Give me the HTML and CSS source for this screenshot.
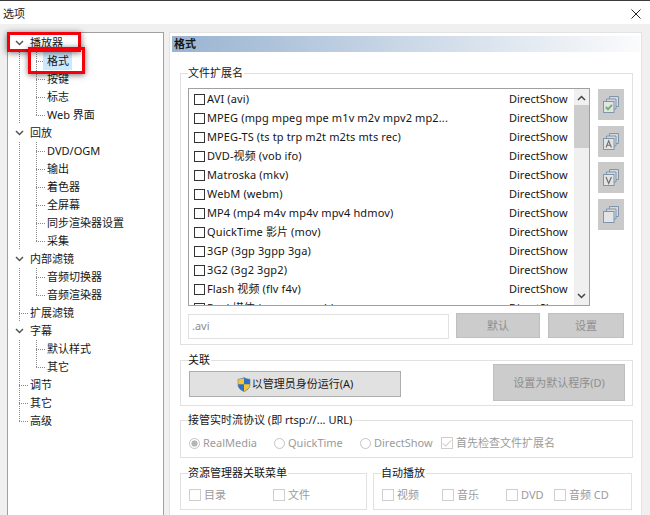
FILE: index.html
```html
<!DOCTYPE html>
<html lang="zh">
<head>
<meta charset="utf-8">
<title>选项</title>
<link rel="stylesheet" href="styles.css">
</head>
<body>
<div class="window">
  <header class="titlebar">
    <span>选项</span>
    <svg class="close" width="10" height="10" viewBox="0 0 10 10"><path d="M0.5 0.5L9.5 9.5M9.5 0.5L0.5 9.5" stroke="#222" stroke-width="1" fill="none"/></svg>
  </header>
  <main class="main">
    <nav class="tree">
      <div class="row"><span class="g chev"><svg width="9" height="6" viewBox="0 0 9 6"><path d="M1 1L4.5 4.5L8 1" stroke="#555" stroke-width="1.5" fill="none"/></svg></span><span class="label">播放器</span></div>
      <div class="row"><span class="g v"></span><span class="g t"></span><span class="label sel">格式</span></div>
      <div class="row"><span class="g v"></span><span class="g t"></span><span class="label">按键</span></div>
      <div class="row"><span class="g v"></span><span class="g t"></span><span class="label">标志</span></div>
      <div class="row"><span class="g v"></span><span class="g l"></span><span class="label">Web 界面</span></div>
      <div class="row"><span class="g chev"><svg width="9" height="6" viewBox="0 0 9 6"><path d="M1 1L4.5 4.5L8 1" stroke="#555" stroke-width="1.5" fill="none"/></svg></span><span class="label">回放</span></div>
      <div class="row"><span class="g v"></span><span class="g t"></span><span class="label">DVD/OGM</span></div>
      <div class="row"><span class="g v"></span><span class="g t"></span><span class="label">输出</span></div>
      <div class="row"><span class="g v"></span><span class="g t"></span><span class="label">着色器</span></div>
      <div class="row"><span class="g v"></span><span class="g t"></span><span class="label">全屏幕</span></div>
      <div class="row"><span class="g v"></span><span class="g t"></span><span class="label">同步渲染器设置</span></div>
      <div class="row"><span class="g v"></span><span class="g l"></span><span class="label">采集</span></div>
      <div class="row"><span class="g chev"><svg width="9" height="6" viewBox="0 0 9 6"><path d="M1 1L4.5 4.5L8 1" stroke="#555" stroke-width="1.5" fill="none"/></svg></span><span class="label">内部滤镜</span></div>
      <div class="row"><span class="g v"></span><span class="g t"></span><span class="label">音频切换器</span></div>
      <div class="row"><span class="g v"></span><span class="g l"></span><span class="label">音频渲染器</span></div>
      <div class="row"><span class="g top t"></span><span class="label">扩展滤镜</span></div>
      <div class="row"><span class="g chev"><svg width="9" height="6" viewBox="0 0 9 6"><path d="M1 1L4.5 4.5L8 1" stroke="#555" stroke-width="1.5" fill="none"/></svg></span><span class="label">字幕</span></div>
      <div class="row"><span class="g v"></span><span class="g t"></span><span class="label">默认样式</span></div>
      <div class="row"><span class="g v"></span><span class="g l"></span><span class="label">其它</span></div>
      <div class="row"><span class="g top t"></span><span class="label">调节</span></div>
      <div class="row"><span class="g top t"></span><span class="label">其它</span></div>
      <div class="row"><span class="g top l"></span><span class="label">高级</span></div>
    </nav>
    <section class="panel">
      <h1 class="heading">格式</h1>
      <div class="group g-files">
        <div class="legend">文件扩展名</div>
        <div class="files-top">
          <div class="list">
            <div class="items">
              <div class="item"><span class="cb"></span><span class="name">AVI (avi)</span><span class="src">DirectShow</span></div>
              <div class="item"><span class="cb"></span><span class="name">MPEG (mpg mpeg mpe m1v m2v mpv2 mp2...</span><span class="src">DirectShow</span></div>
              <div class="item"><span class="cb"></span><span class="name">MPEG-TS (ts tp trp m2t m2ts mts rec)</span><span class="src">DirectShow</span></div>
              <div class="item"><span class="cb"></span><span class="name">DVD-视频 (vob ifo)</span><span class="src">DirectShow</span></div>
              <div class="item"><span class="cb"></span><span class="name">Matroska (mkv)</span><span class="src">DirectShow</span></div>
              <div class="item"><span class="cb"></span><span class="name">WebM (webm)</span><span class="src">DirectShow</span></div>
              <div class="item"><span class="cb"></span><span class="name">MP4 (mp4 m4v mp4v mpv4 hdmov)</span><span class="src">DirectShow</span></div>
              <div class="item"><span class="cb"></span><span class="name">QuickTime 影片 (mov)</span><span class="src">DirectShow</span></div>
              <div class="item"><span class="cb"></span><span class="name">3GP (3gp 3gpp 3ga)</span><span class="src">DirectShow</span></div>
              <div class="item"><span class="cb"></span><span class="name">3G2 (3g2 3gp2)</span><span class="src">DirectShow</span></div>
              <div class="item"><span class="cb"></span><span class="name">Flash 视频 (flv f4v)</span><span class="src">DirectShow</span></div>
              <div class="item"><span class="cb"></span><span class="name">Real 媒体 (rm ram rmvb)</span><span class="src">DirectShow</span></div>
            </div>
            <div class="scrollbar">
              <svg class="arrow" width="9" height="6" viewBox="0 0 9 6"><path d="M1 5L4.5 1.5L8 5" stroke="#444" stroke-width="1.5" fill="none"/></svg>
              <div class="thumb"></div>
              <svg class="arrow" width="9" height="6" viewBox="0 0 9 6"><path d="M1 1L4.5 4.5L8 1" stroke="#444" stroke-width="1.5" fill="none"/></svg>
            </div>
          </div>
          <div class="sidebtns">
            <button class="sidebtn"><svg width="16" height="17" viewBox="0 0 16 17"><path d="M6.5 3V0.5H15.5V10.5H13" fill="#d8d8d8" stroke="#7f95ad"/><path d="M3.5 5.5V3H13V13H10.5" fill="#d8d8d8" stroke="#7f95ad"/><rect x="0.5" y="5.5" width="10.5" height="11" fill="#e2e4e6" stroke="#7f95ad"/><path d="M2.8 11L5 13.3L9 8.8" stroke="#6db56d" stroke-width="2" fill="none"/></svg></button>
            <button class="sidebtn"><svg width="16" height="17" viewBox="0 0 16 17"><path d="M6.5 3V0.5H15.5V10.5H13" fill="#d8d8d8" stroke="#7f95ad"/><path d="M3.5 5.5V3H13V13H10.5" fill="#d8d8d8" stroke="#7f95ad"/><rect x="0.5" y="5.5" width="10.5" height="11" fill="#e2e4e6" stroke="#7f95ad"/><path d="M3 14.5L5.7 7.8L8.4 14.5M4 12.2H7.4" stroke="#6f6f6f" stroke-width="1.1" fill="none"/></svg></button>
            <button class="sidebtn"><svg width="16" height="17" viewBox="0 0 16 17"><path d="M6.5 3V0.5H15.5V10.5H13" fill="#d8d8d8" stroke="#7f95ad"/><path d="M3.5 5.5V3H13V13H10.5" fill="#d8d8d8" stroke="#7f95ad"/><rect x="0.5" y="5.5" width="10.5" height="11" fill="#e2e4e6" stroke="#7f95ad"/><path d="M3 8L5.7 14.5L8.4 8" stroke="#6f6f6f" stroke-width="1.2" fill="none"/></svg></button>
            <button class="sidebtn"><svg width="16" height="17" viewBox="0 0 16 17"><path d="M6.5 3V0.5H15.5V10.5H13" fill="#d8d8d8" stroke="#7f95ad"/><path d="M3.5 5.5V3H13V13H10.5" fill="#d8d8d8" stroke="#7f95ad"/><rect x="0.5" y="5.5" width="10.5" height="11" fill="#e2e4e6" stroke="#7f95ad"/></svg></button>
          </div>
        </div>
        <div class="files-bottom">
          <div class="ext">.avi</div>
          <button class="btn-off btn-default">默认</button>
          <button class="btn-off btn-set">设置</button>
        </div>
      </div>
      <div class="group g-assoc">
        <div class="legend">关联</div>
        <div class="assoc-row">
          <button class="btn-admin"><svg width="14" height="15" viewBox="0 0 14 15"><path d="M7 0.5C5 1.8 3 2.2 1 2.2V7.5C1 11 3.6 13.2 7 14.5C10.4 13.2 13 11 13 7.5V2.2C11 2.2 9 1.8 7 0.5Z" fill="#2f6fc4" stroke="#6c7f99" stroke-width="0.6"/><path d="M7 1V7.3H1.2V2.4C3.2 2.4 5.2 2 7 1ZM7 7.3H12.8C12.8 10.8 10.2 13 7 14.2Z" fill="#f7c52e"/></svg><span>以管理员身份运行(A)</span></button>
          <button class="btn-off btn-default-app">设置为默认程序(D)</button>
        </div>
      </div>
      <div class="group g-stream">
        <div class="legend">接管实时流协议 (即 rtsp://... URL)</div>
        <div class="opts">
          <span class="opt opt-rm"><span class="radio on"></span>RealMedia</span>
          <span class="opt opt-qt"><span class="radio"></span>QuickTime</span>
          <span class="opt opt-ds"><span class="radio"></span>DirectShow</span>
          <span class="opt"><span class="box checked"><svg width="11" height="9" viewBox="0 0 11 9"><path d="M1 4.5L4 7.5L10 1" stroke="#bdbdbd" stroke-width="1.1" fill="none"/></svg></span>首先检查文件扩展名</span>
        </div>
      </div>
      <div class="pair">
        <div class="group g-shell">
          <div class="legend">资源管理器关联菜单</div>
          <div class="opts">
            <span class="opt opt-dir"><span class="box"></span>目录</span>
            <span class="opt"><span class="box"></span>文件</span>
          </div>
        </div>
        <div class="group g-auto">
          <div class="legend">自动播放</div>
          <div class="opts">
            <span class="opt opt-vid"><span class="box"></span>视频</span>
            <span class="opt opt-mus"><span class="box"></span>音乐</span>
            <span class="opt opt-dvd"><span class="box"></span>DVD</span>
            <span class="opt"><span class="box"></span>音频 CD</span>
          </div>
        </div>
      </div>
    </section>
  </main>
  <div class="mark mark-a"></div>
  <div class="mark mark-b"></div>
</div>
</body>
</html>
```
FILE: styles.css
```css
* { box-sizing: border-box; }
html, body { margin: 0; padding: 0; }
body {
  width: 650px;
  height: 515px;
  overflow: hidden;
  font: 11px/16px "Noto Sans", "Noto Sans CJK SC", sans-serif;
  color: #161616;
}
.window { position: relative; width: 650px; height: 515px; display: flex; flex-direction: column; background: #f0f0f0; }
.titlebar {
  height: 24px;
  flex: none;
  background: #fff;
  border-top: 1px solid #3c3c3c;
  padding: 2px 9px 0 3px;
  display: flex;
  justify-content: space-between;
  align-items: center;
}
.titlebar span { color: #222; }
.main { flex: 1; min-height: 0; display: flex; gap: 5px; padding: 8px 0 0 7px; }

/* tree */
.tree {
  width: 157px;
  height: 500px;
  flex: none;
  background: #fff;
  border: 1px solid #a0a0a0;
  padding: 0.5px 0 0 11px;
}
.row { height: 18.03px; display: flex; align-items: stretch; }
.g { flex: none; width: 11px; display: block; }
.g.v { width: 17px; }
.v { background: repeating-linear-gradient(to bottom, #8a8a8a 0 1px, transparent 1px 2px) left top / 1px 100% no-repeat; }
.t {
  background:
    repeating-linear-gradient(to bottom, #8a8a8a 0 1px, transparent 1px 2px) left top / 1px 100% no-repeat,
    repeating-linear-gradient(to right, #8a8a8a 0 1px, transparent 1px 2px) left 9px / 9px 1px no-repeat;
}
.l {
  background:
    repeating-linear-gradient(to bottom, #8a8a8a 0 1px, transparent 1px 2px) left top / 1px 10px no-repeat,
    repeating-linear-gradient(to right, #8a8a8a 0 1px, transparent 1px 2px) left 9px / 9px 1px no-repeat;
}
.chev { display: flex; align-items: center; }
.chev svg { margin-left: -4px; flex: none; }
.label { line-height: 18px; white-space: nowrap; }
.sel { background: #cce8ff; margin-left: -4px; padding: 0 3px 0 4px; }

/* right panel */
.panel {
  width: 473px;
  height: 500px;
  flex: none;
  background: #fff;
  border: 1px solid #e3e3e3;
  padding: 3px 1px 0 2px;
}
.heading {
  margin: 0;
  height: 16px;
  padding: 0 2px;
  font-size: 11px;
  line-height: 16px;
  font-weight: 700;
  background: linear-gradient(90deg, #99b4d1, #fbfbfc);
}
.group { border: 1px solid #e1e1e1; }
.legend {
  width: fit-content;
  margin: -9px 0 1px 7px;
  padding: 0 1px 0 0;
  height: 16px;
  background: #fff;
  white-space: nowrap;
}
.g-files { margin: 21px 7px 0 8px; height: 272px; padding: 0 7px; }
.g-files .legend { margin-left: 0; }
.files-top { display: flex; gap: 8px; margin-top: 7px; }
.list {
  width: 402px;
  height: 218px;
  flex: none;
  display: flex;
  border: 1px solid #a0a0a0;
  background: #fff;
  overflow: hidden;
}
.items { flex: 1; min-width: 0; padding-top: 1px; }
.item { height: 19px; display: flex; align-items: center; padding-left: 5px; }
.cb { width: 11px; height: 11px; border: 1px solid #333; flex: none; margin-right: 2px; }
.name { flex: 1; white-space: nowrap; overflow: hidden; letter-spacing: 0.12px; margin-bottom: 1px; }
.src { flex: none; width: 65px; margin-bottom: 1px; }
.scrollbar { width: 15px; flex: none; background: #f0f0f0; display: flex; flex-direction: column; align-items: center; }
.arrow { flex: none; margin: 6px 0; }
.thumb { align-self: stretch; height: 43px; background: #cdcdcd; margin-bottom: auto; margin-top: -2px; }
.sidebtns { display: flex; flex-direction: column; gap: 5.5px; margin-top: 1px; }
.sidebtn {
  width: 26px;
  height: 31px;
  padding: 0;
  border: 0;
  background: #cacaca;
  display: flex;
  align-items: center;
  justify-content: center;
}
.files-bottom { display: flex; align-items: flex-start; margin-top: 7px; }
.ext {
  width: 261px;
  height: 25px;
  margin-top: 1px;
  border: 1px solid #e1e1e1;
  padding: 3px 3px;
  color: #8c8c8c;
}
button { font: inherit; }
.btn-off { border: 1px solid #bfbfbf; background: #cccccc; color: #8e8e8e; padding: 0; }
.btn-default { width: 84px; height: 25px; margin-left: 7px; }
.btn-set { width: 76px; height: 25px; margin-left: 8px; }
.g-assoc { margin: 15px 7px 0 8px; height: 46px; padding: 0 7px 0 8px; }
.g-assoc .legend { margin-left: -1px; }
.assoc-row { display: flex; justify-content: space-between; align-items: flex-start; margin-top: -5px; }
.btn-admin {
  width: 212px;
  height: 26px;
  margin-top: 7px;
  border: 1px solid #adadad;
  background: #e1e1e1;
  color: #1c1c1c;
  display: flex;
  align-items: center;
  justify-content: center;
  gap: 1px;
  padding: 0;
}
.btn-default-app { width: 132px; height: 37px; }
.g-stream { margin: 14px 7px 0 8px; height: 38px; }
.opts { display: flex; align-items: center; color: #9b9b9b; padding: 6px 0 0 8px; }
.pair .opts { padding-top: 5px; }
.opt { display: flex; align-items: center; white-space: nowrap; gap: 3px; }
.opt-rm { width: 85px; }
.opt-qt { width: 86px; }
.opt-ds { width: 81px; }
.radio { width: 11px; height: 11px; border-radius: 50%; border: 1px solid #c4c4c4; background: #fff; flex: none; }
.radio.on { background: radial-gradient(circle, #b5b5b5 0 2.8px, #fff 3.4px); }
.box { width: 12px; height: 12px; border: 1px solid #cfcfcf; flex: none; display: flex; align-items: center; justify-content: center; }
.pair { display: flex; gap: 6px; margin: 15px 0 0 8px; }
.g-shell { width: 187px; height: 37px; }
.g-auto { width: 259px; height: 37px; }
.opt-dir { width: 84px; }
.opt-vid { width: 60px; }
.opt-mus { width: 64px; }
.opt-dvd { width: 48px; }

/* red annotation rectangles */
.mark { position: absolute; border: 3px solid #f5000a; box-shadow: 0 1px 6px rgba(0, 0, 0, 0.55); }
.mark-a { left: 7px; top: 32px; width: 74px; height: 20px; }
.mark-b { left: 28px; top: 47px; width: 57px; height: 27px; }
```
